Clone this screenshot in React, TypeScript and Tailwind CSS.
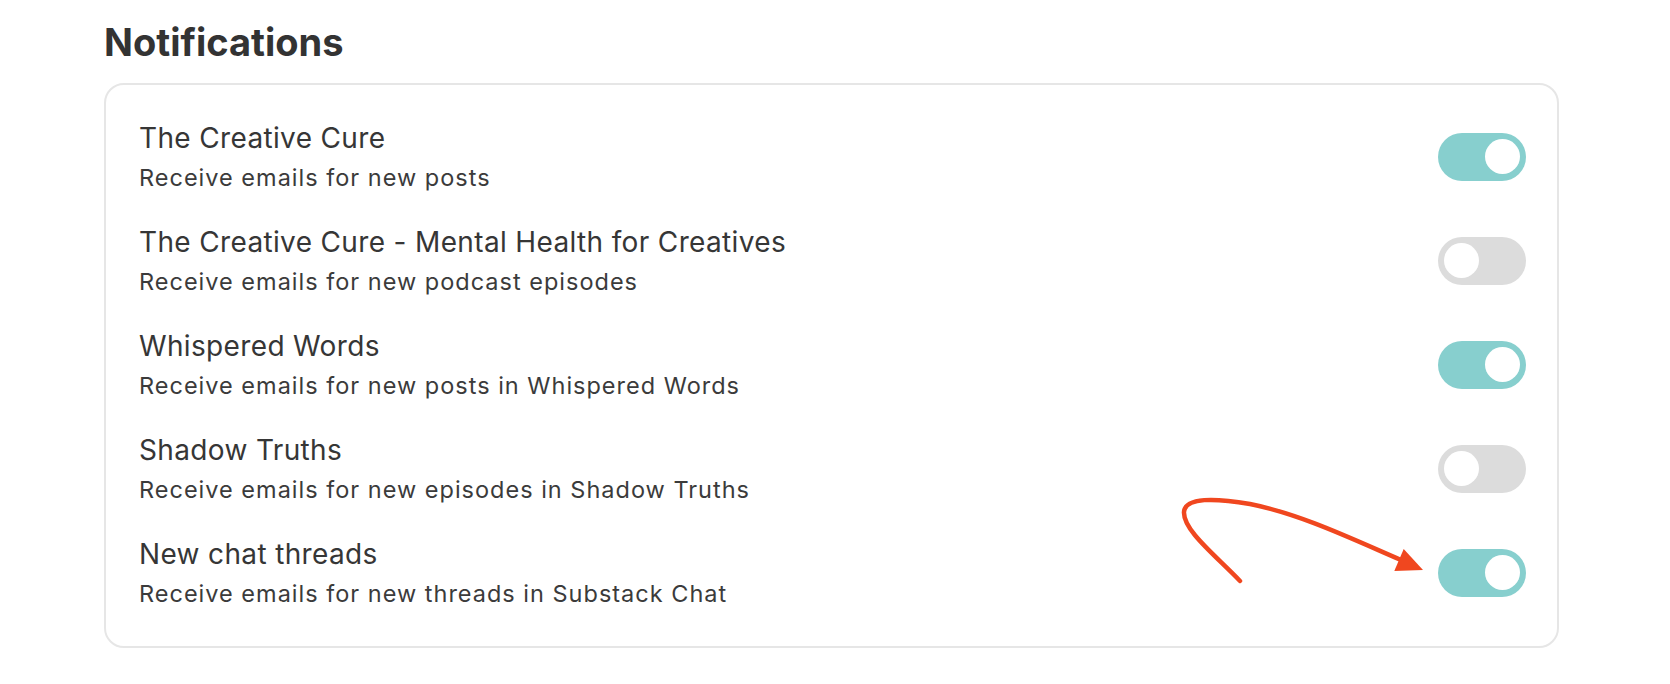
import React from "react";

type Row = { title: string; subtitle: string; on: boolean };

const rows: Row[] = [
  { title: "The Creative Cure", subtitle: "Receive emails for new posts", on: true },
  {
    title: "The Creative Cure - Mental Health for Creatives",
    subtitle: "Receive emails for new podcast episodes",
    on: false,
  },
  { title: "Whispered Words", subtitle: "Receive emails for new posts in Whispered Words", on: true },
  { title: "Shadow Truths", subtitle: "Receive emails for new episodes in Shadow Truths", on: false },
  { title: "New chat threads", subtitle: "Receive emails for new threads in Substack Chat", on: true },
];

function Toggle({ on }: { on: boolean }) {
  return (
    <div
      className={
        on
          ? "flex h-[48px] w-[88px] shrink-0 items-center justify-end rounded-full bg-[#87cfce] px-[6px]"
          : "flex h-[48px] w-[88px] shrink-0 items-center justify-start rounded-full bg-[#dcdcdc] px-[6px]"
      }
    >
      <div className="h-[35px] w-[35px] rounded-full bg-white" />
    </div>
  );
}

export default function App() {
  return (
    <div
      className="relative h-[684px] w-[1670px] overflow-hidden bg-white"
      style={{ fontFamily: "Inter, 'Noto Sans', sans-serif" }}
    >
      <div className="pl-[104px] pt-[19px]">
        <h1 className="text-[38px] font-bold leading-[46px] text-[#333333]">Notifications</h1>
        <div className="mt-[18px] flex w-[1455px] flex-col gap-[28px] rounded-[20px] border-2 border-[#e6e6e6] pb-[35px] pl-[33px] pr-[31px] pt-[33.5px]">
          {rows.map((r) => (
            <div key={r.title} className="flex items-center justify-between">
              <div className="flex flex-col">
                <div className="text-[28px] leading-[38px] tracking-[0.35px] text-[#363636]">{r.title}</div>
                <div className="mt-[4px] text-[23.5px] leading-[34px] tracking-[1px] text-[#3b3b3b]">
                  {r.subtitle}
                </div>
              </div>
              <Toggle on={r.on} />
            </div>
          ))}
        </div>
      </div>
      <svg
        className="pointer-events-none absolute left-0 top-0"
        width="1670"
        height="684"
        viewBox="0 0 1670 684"
      >
        <path
          d="M1240 581 C1215 555, 1183 530, 1184 512 C1185 497, 1215 498, 1250 504 C1300 514, 1350 538, 1401 560"
          fill="none"
          stroke="#f0471f"
          strokeWidth="4.5"
          strokeLinecap="round"
        />
        <polygon points="1423,570 1403.7,549 1394.3,571" fill="#f0471f" />
      </svg>
    </div>
  );
}
